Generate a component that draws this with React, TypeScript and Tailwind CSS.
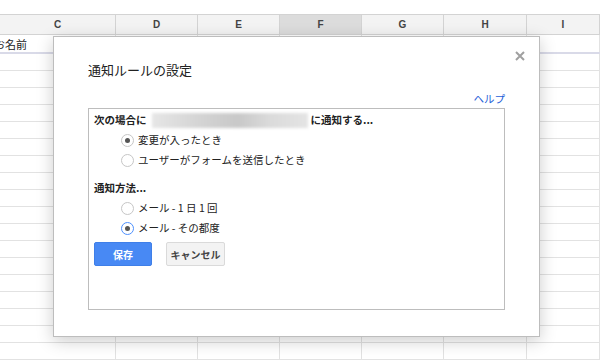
import React from "react";

const jp = { fontFamily: '"Noto Sans CJK JP", "Noto Sans", sans-serif' };

const cols = ["C", "D", "E", "F", "G", "H", "I"];
const rows = Array.from({ length: 18 }, (_, i) => i);

function Radio({ checked, focus, label }: { checked?: boolean; focus?: boolean; label: string }) {
  return (
    <div className="flex items-center h-[20px] pl-[32px]">
      <span
        className={
          focus
            ? "w-[13px] h-[13px] rounded-full border border-[#4d90fe] bg-white flex items-center justify-center"
            : "w-[13px] h-[13px] rounded-full border border-[#c6c6c6] bg-white flex items-center justify-center"
        }
      >
        {checked && <span className="w-[5px] h-[5px] rounded-full bg-[#555]" />}
      </span>
      <span className="ml-[4px] text-[10.5px] leading-[14px] text-[#222]">{label}</span>
    </div>
  );
}

export default function App() {
  return (
    <div className="relative w-[600px] h-[362px] overflow-hidden bg-white" style={jp}>
      {/* sheet */}
      <div className="pt-[14px]">
        <div className="grid grid-cols-[116px_82px_82px_82px_82px_83px_1fr] h-[21px] border-t border-b border-[#d3d3d3] bg-[#f3f3f3]">
          {cols.map((c) => (
            <div
              key={c}
              className={
                c === "F"
                  ? "flex items-center justify-center border-r border-[#d3d3d3] bg-[#dcdcdc] text-[10px] font-bold text-[#444]"
                  : "flex items-center justify-center border-r border-[#d3d3d3] text-[10px] font-bold text-[#444]"
              }
              style={{ fontFamily: '"Liberation Sans", Arial, sans-serif' }}
            >
              {c}
            </div>
          ))}
        </div>
        <div className="grid grid-cols-[116px_82px_82px_82px_82px_83px_1fr] h-[19px] border-b-2 border-[#d9dae8]">
          {cols.map((c) => (
            <div key={c} className="border-r border-[#e2e2e2] flex items-center overflow-hidden">
              {c === "C" && (
                <span className="ml-[-6px] text-[11px] leading-[14px] text-[#222] whitespace-nowrap">お名前</span>
              )}
            </div>
          ))}
        </div>
        {rows.map((r) => (
          <div key={r} className="grid grid-cols-[116px_82px_82px_82px_82px_83px_1fr] h-[17px] border-b border-[#e2e2e2]">
            {cols.map((c) => (
              <div key={c} className="border-r border-[#e2e2e2]" />
            ))}
          </div>
        ))}
      </div>

      {/* dialog */}
      <div className="absolute left-[53px] top-[36px] w-[487px] h-[301px] bg-white border border-[#bdbdbd] shadow-[0_4px_16px_rgba(0,0,0,0.2)] px-[34px] pt-[25px]">
        <svg
          className="absolute right-[14px] top-[14px]"
          width="10"
          height="10"
          viewBox="0 0 10 10"
        >
          <path d="M1 1L9 9M9 1L1 9" stroke="#a0a0a0" strokeWidth="2" />
        </svg>
        <div className="text-[13px] leading-[16px] text-[#222]">通知ルールの設定</div>
        <div className="mt-[14px] flex justify-end">
          <span className="text-[10.5px] leading-[14px] text-[#1f5fd8]">ヘルプ</span>
        </div>
        <div className="mt-[2px] h-[202px] border border-[#bdbdbd] pt-[3px]">
          <div className="pl-[5px] flex items-center h-[16px] text-[10.5px] font-bold text-[#222] whitespace-nowrap">
            <span>次の場合に</span>
            <span className="ml-[5px] mr-[3px] w-[156px] h-[15px] bg-[linear-gradient(90deg,#e6e6e6,#d4d4d4_30%,#c8c8c8_55%,#dadada_75%,#e4e4e4)] blur-[1.5px]" />
            <span>に通知する...</span>
          </div>
          <div className="mt-[2px]">
            <Radio checked label="変更が入ったとき" />
            <Radio label="ユーザーがフォームを送信したとき" />
          </div>
          <div className="mt-[10px] pl-[5px] h-[16px] flex items-center text-[10.5px] font-bold text-[#222]">通知方法...</div>
          <div className="mt-[2px]">
            <Radio label="メール - 1 日 1 回" />
            <Radio checked focus label="メール - その都度" />
          </div>
          <div className="mt-[4px] pl-[5px] flex gap-[14px]">
            <button className="w-[58px] h-[24px] rounded-[2px] bg-[#4889f4] border border-[#3f7fe8] text-white text-[10px] font-bold">
              保存
            </button>
            <button className="w-[59px] h-[24px] rounded-[2px] bg-[#f3f3f3] border border-[#dadada] text-[#444] text-[10px] font-bold">
              キャンセル
            </button>
          </div>
        </div>
      </div>
    </div>
  );
}
